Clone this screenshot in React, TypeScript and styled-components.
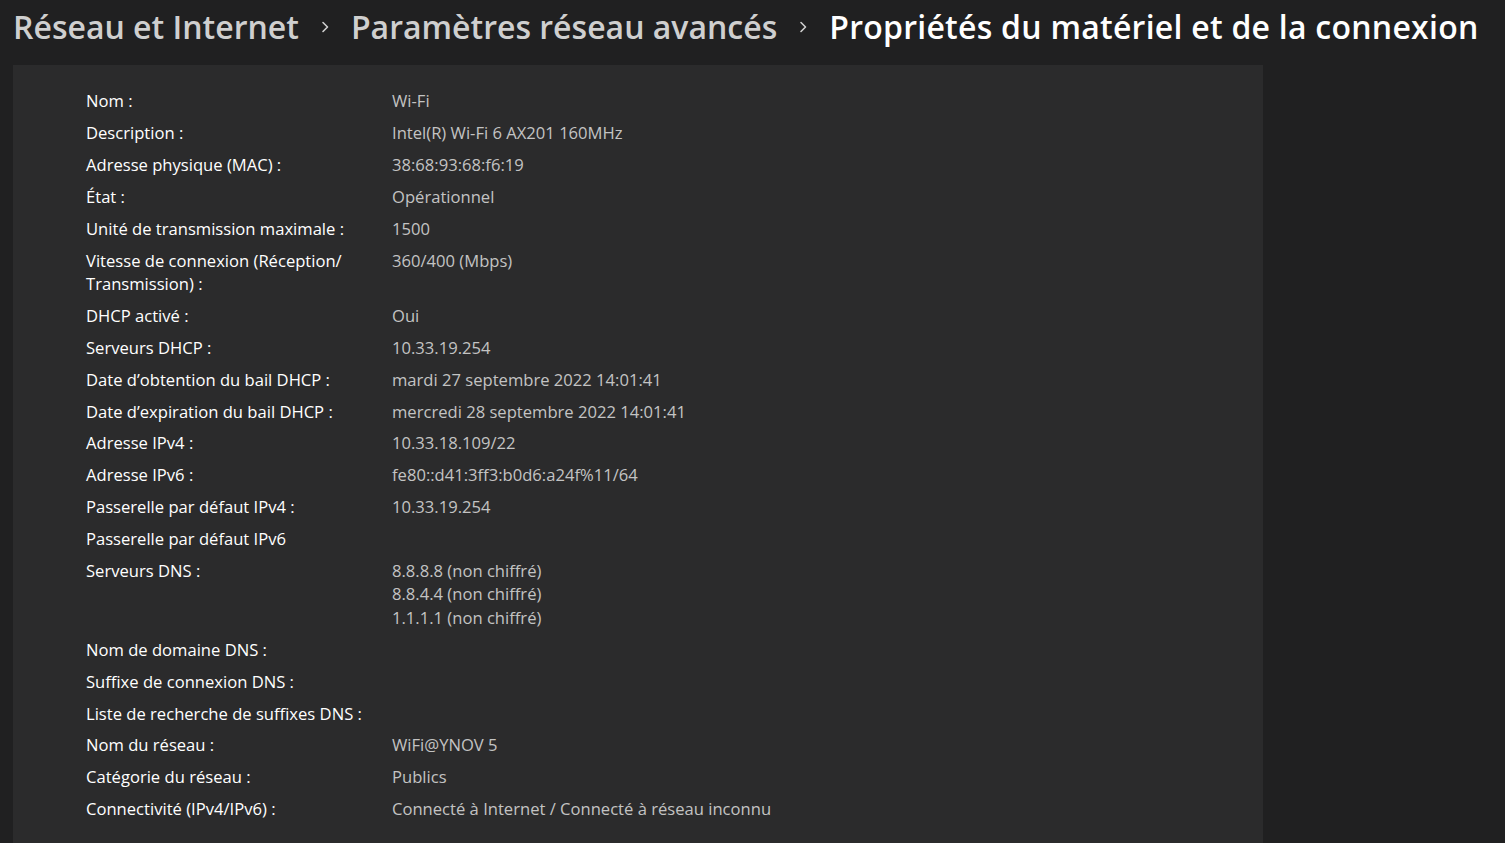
import React from "react";
import styled, { createGlobalStyle } from "styled-components";

const Global = createGlobalStyle`
  html, body { margin: 0; padding: 0; background: #202020; }
  body { font-family: "Open Sans", "Noto Sans", sans-serif; -webkit-font-smoothing: antialiased; }
  #root { min-height: 843px; }
`;

const Page = styled.div`
  width: 1505px;
  height: 843px;
  overflow: hidden;
  background: #202021;
  display: flex;
  flex-direction: column;
`;

const Breadcrumb = styled.nav`
  display: flex;
  align-items: center;
  height: 53px;
  padding: 0 0 12px 13px;
  white-space: nowrap;
`;

const Crumb = styled.span<{ $current?: boolean }>`
  font-family: "Open Sans", sans-serif;
  font-size: 32px;
  font-weight: 600;
  letter-spacing: ${(p) => (p.$current ? "0.25px" : "0")};
  color: ${(p) => (p.$current ? "#ffffff" : "#cfcfcf")};
`;

const Chevron = styled.span`
  display: inline-flex;
  width: 52px;
  justify-content: center;
  align-items: center;
  padding-top: 1px;
`;

const Panel = styled.section`
  margin-left: 13px;
  width: 1250px;
  flex: 1;
  background: #2b2b2c;
  padding: 20px 0 0 73px;
  box-sizing: border-box;
`;

const Table = styled.div`
  display: grid;
  grid-template-columns: 306px 1fr;
`;

const Label = styled.div`
  font-size: 16.6px;
  line-height: 23.5px;
  padding: 4.2px 12px 4.2px 0;
  color: #ffffff;
`;

const Value = styled.div`
  font-size: 16.6px;
  line-height: 23.5px;
  padding: 4.2px 0;
  color: #c3c3c3;
`;

const rows: [string, string[]][] = [
  ["Nom :", ["Wi-Fi"]],
  ["Description :", ["Intel(R) Wi-Fi 6 AX201 160MHz"]],
  ["Adresse physique (MAC) :", ["38:68:93:68:f6:19"]],
  ["État :", ["Opérationnel"]],
  ["Unité de transmission maximale :", ["1500"]],
  ["Vitesse de connexion (Réception/ Transmission) :", ["360/400 (Mbps)"]],
  ["DHCP activé :", ["Oui"]],
  ["Serveurs DHCP :", ["10.33.19.254"]],
  ["Date d’obtention du bail DHCP :", ["mardi 27 septembre 2022 14:01:41"]],
  ["Date d’expiration du bail DHCP :", ["mercredi 28 septembre 2022 14:01:41"]],
  ["Adresse IPv4 :", ["10.33.18.109/22"]],
  ["Adresse IPv6 :", ["fe80::d41:3ff3:b0d6:a24f%11/64"]],
  ["Passerelle par défaut IPv4 :", ["10.33.19.254"]],
  ["Passerelle par défaut IPv6", []],
  ["Serveurs DNS :", ["8.8.8.8 (non chiffré)", "8.8.4.4 (non chiffré)", "1.1.1.1 (non chiffré)"]],
  ["Nom de domaine DNS :", []],
  ["Suffixe de connexion DNS :", []],
  ["Liste de recherche de suffixes DNS :", []],
  ["Nom du réseau :", ["WiFi@YNOV 5"]],
  ["Catégorie du réseau :", ["Publics"]],
  ["Connectivité (IPv4/IPv6) :", ["Connecté à Internet / Connecté à réseau inconnu"]],
];

const ChevronIcon = () => (
  <svg width="10" height="14" viewBox="0 0 10 14" fill="none">
    <path d="M3 2.5 L7.5 7 L3 11.5" stroke="#cfcfcf" strokeWidth="1.6" strokeLinecap="round" strokeLinejoin="round" />
  </svg>
);

export default function App() {
  return (
    <Page>
      <Global />
      <Breadcrumb>
        <Crumb>Réseau et Internet</Crumb>
        <Chevron><ChevronIcon /></Chevron>
        <Crumb>Paramètres réseau avancés</Crumb>
        <Chevron><ChevronIcon /></Chevron>
        <Crumb $current>Propriétés du matériel et de la connexion</Crumb>
      </Breadcrumb>
      <Panel>
        <Table>
          {rows.map(([label, values]) => (
            <React.Fragment key={label}>
              <Label>{label}</Label>
              <Value>
                {values.map((v) => (
                  <div key={v}>{v}</div>
                ))}
              </Value>
            </React.Fragment>
          ))}
        </Table>
      </Panel>
    </Page>
  );
}
